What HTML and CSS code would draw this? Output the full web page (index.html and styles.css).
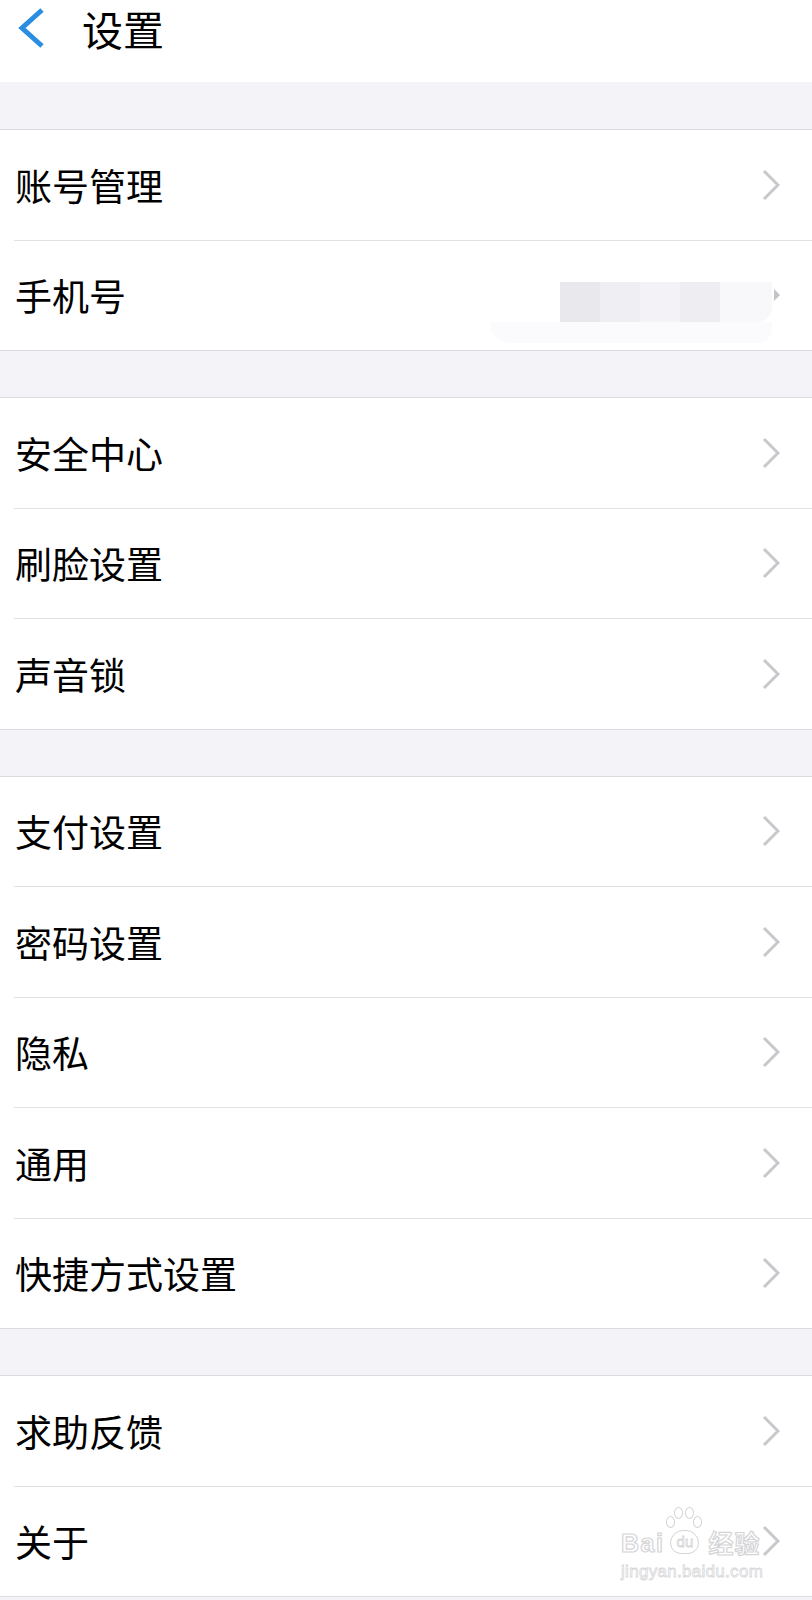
FILE: index.html
```html
<!DOCTYPE html>
<html lang="zh-CN">

<head>
	<meta charset="UTF-8">
	<meta name="viewport" content="width=device-width, initial-scale=1.0">
	<title>设置</title>
	<link rel="stylesheet" href="styles.css">
</head>

<body>

	<div class="page">
		<header class="topbar">
			<svg class="back" width="30" height="42" viewBox="0 0 30 42">
				<path d="M26 3 L6 21 L26 39" fill="none" stroke="#2b8de2" stroke-width="5" />
			</svg>
			<h1 class="title">设置</h1>
		</header>

		<div class="gap first"></div>
		<ul class="group">
			<li class="row"><span class="label">账号管理</span><svg class="chev" width="18" height="32" viewBox="0 0 18 32"><path d="M2 2 L16 16 L2 30" fill="none" stroke="#c8c7cc" stroke-width="3" /></svg></li>
			<li class="row">
				<span class="label">手机号</span>
				<span class="mask">
					<i class="blk b1"></i><i class="blk b2"></i><i class="blk b3"></i><i class="blk b4"></i><i class="blk b5"></i>
				</span>
				<span class="tip"></span>
			</li>
		</ul>

		<div class="gap"></div>
		<ul class="group">
			<li class="row"><span class="label">安全中心</span><svg class="chev" width="18" height="32" viewBox="0 0 18 32"><path d="M2 2 L16 16 L2 30" fill="none" stroke="#c8c7cc" stroke-width="3" /></svg></li>
			<li class="row"><span class="label">刷脸设置</span><svg class="chev" width="18" height="32" viewBox="0 0 18 32"><path d="M2 2 L16 16 L2 30" fill="none" stroke="#c8c7cc" stroke-width="3" /></svg></li>
			<li class="row"><span class="label">声音锁</span><svg class="chev" width="18" height="32" viewBox="0 0 18 32"><path d="M2 2 L16 16 L2 30" fill="none" stroke="#c8c7cc" stroke-width="3" /></svg></li>
		</ul>

		<div class="gap"></div>
		<ul class="group">
			<li class="row"><span class="label">支付设置</span><svg class="chev" width="18" height="32" viewBox="0 0 18 32"><path d="M2 2 L16 16 L2 30" fill="none" stroke="#c8c7cc" stroke-width="3" /></svg></li>
			<li class="row"><span class="label">密码设置</span><svg class="chev" width="18" height="32" viewBox="0 0 18 32"><path d="M2 2 L16 16 L2 30" fill="none" stroke="#c8c7cc" stroke-width="3" /></svg></li>
			<li class="row"><span class="label">隐私</span><svg class="chev" width="18" height="32" viewBox="0 0 18 32"><path d="M2 2 L16 16 L2 30" fill="none" stroke="#c8c7cc" stroke-width="3" /></svg></li>
			<li class="row"><span class="label">通用</span><svg class="chev" width="18" height="32" viewBox="0 0 18 32"><path d="M2 2 L16 16 L2 30" fill="none" stroke="#c8c7cc" stroke-width="3" /></svg></li>
			<li class="row"><span class="label">快捷方式设置</span><svg class="chev" width="18" height="32" viewBox="0 0 18 32"><path d="M2 2 L16 16 L2 30" fill="none" stroke="#c8c7cc" stroke-width="3" /></svg></li>
		</ul>

		<div class="gap"></div>
		<ul class="group">
			<li class="row"><span class="label">求助反馈</span><svg class="chev" width="18" height="32" viewBox="0 0 18 32"><path d="M2 2 L16 16 L2 30" fill="none" stroke="#c8c7cc" stroke-width="3" /></svg></li>
			<li class="row"><span class="label">关于</span><svg class="chev" width="18" height="32" viewBox="0 0 18 32"><path d="M2 2 L16 16 L2 30" fill="none" stroke="#c8c7cc" stroke-width="3" /></svg></li>
		</ul>
		<div class="tail"></div>

		<!-- watermark over the last row -->
		<div class="watermark">
			<div class="wm-top">
				<span class="wm-word">Bai</span>
				<span class="paw">
					<i class="toe t1"></i><i class="toe t2"></i><i class="toe t3"></i><i class="toe t4"></i>
					<span class="pad">du</span>
				</span>
				<span class="wm-word wm-cn">经验</span>
			</div>
			<div class="wm-url">jingyan.baidu.com</div>
		</div>
	</div>

</body>

</html>
```

FILE: styles.css
```css
/* iOS style settings list */
body {
	margin: 0;
	background: #f4f3f8;
	font-family: "PingFang SC", "Noto Sans CJK SC", "Noto Sans", sans-serif;
	color: #000;
}

.page {
	position: relative;
	width: 812px;
}

.topbar {
	height: 82px;
	background: #fff;
	display: flex;
	align-items: flex-start;
}

.back {
	margin: 7px 0 0 16px;
}

.title {
	margin: 0 0 0 36px;
	font-size: 41px;
	font-weight: 400;
	line-height: 56px;
}

.gap {
	height: 46px;
}

.gap.first {
	height: 47px;
}

.group {
	list-style: none;
	margin: 0;
	padding: 0;
	background: #fff;
	border-top: 1px solid #dcdbe0;
	border-bottom: 1px solid #dcdbe0;
}

.row {
	height: 109.5px;
	margin-left: 14px;
	padding: 0 32px 0 1px;
	display: flex;
	align-items: center;
	border-bottom: 1px solid #e2e1e6;
}

.row:last-child {
	border-bottom: none;
}

.label {
	flex: 1;
	font-size: 37px;
	line-height: 40px;
}

.chev {
	flex: none;
}

/* blurred phone number */
.mask {
	position: relative;
	display: flex;
	margin-top: 14px;
	height: 40px;
}

.mask::after {
	content: "";
	position: absolute;
	left: -70px;
	right: 0;
	top: 40px;
	height: 21px;
	background: #fbfafd;
	border-radius: 0 0 40px 60px;
}

.blk {
	display: block;
	width: 40px;
	height: 40px;
}

.b1 { background: #e9e8ed; }
.b2 { background: #efeef2; }
.b3 { background: #f3f2f6; }
.b4 { background: #eeedf2; }
.b5 { width: 52px; background: #f8f7fa; border-radius: 0 0 14px 0; }

.tip {
	margin-left: 2px;
	width: 0;
	height: 0;
	border-top: 6px solid transparent;
	border-bottom: 6px solid transparent;
	border-left: 6px solid #c4c3c8;
}

.tail {
	height: 4px;
}

/* baidu jingyan watermark */
.watermark {
	position: absolute;
	left: 621px;
	top: 1506px;
	width: 150px;
}

.wm-top {
	display: flex;
	align-items: flex-end;
	height: 48px;
}

.wm-word {
	font-family: "Liberation Sans", sans-serif;
	font-size: 25px;
	font-weight: 700;
	line-height: 22px;
	color: rgba(255, 255, 255, 0.7);
	-webkit-text-stroke: 1.2px #d4d4d7;
	letter-spacing: 1.5px;
}

.wm-cn {
	font-family: "Noto Sans CJK SC", sans-serif;
	font-size: 25px;
	line-height: 24px;
	letter-spacing: 1px;
	margin-left: 6px;
}

.paw {
	position: relative;
	width: 38px;
	height: 48px;
	margin-left: 0;
}

.toe {
	position: absolute;
	width: 7px;
	height: 10px;
	border: 1.2px solid #d4d4d7;
	border-radius: 50%;
}

.t1 { left: 2px; top: 10px; }
.t2 { left: 10px; top: 1px; }
.t3 { left: 21px; top: 1px; }
.t4 { left: 29px; top: 10px; }

.pad {
	position: absolute;
	left: 6px;
	bottom: 0;
	width: 27px;
	height: 22px;
	border: 1.2px solid #d4d4d7;
	border-radius: 13px 13px 11px 11px;
	font-family: "Liberation Sans", sans-serif;
	font-size: 15px;
	line-height: 22px;
	text-align: center;
	color: #fff;
	-webkit-text-stroke: 0.8px #d4d4d7;
}

.wm-url {
	margin-top: 9px;
	font-family: "Liberation Sans", sans-serif;
	font-size: 17px;
	line-height: 17px;
	color: #fff;
	-webkit-text-stroke: 0.8px #d7d7da;
	letter-spacing: 0.3px;
}
```
